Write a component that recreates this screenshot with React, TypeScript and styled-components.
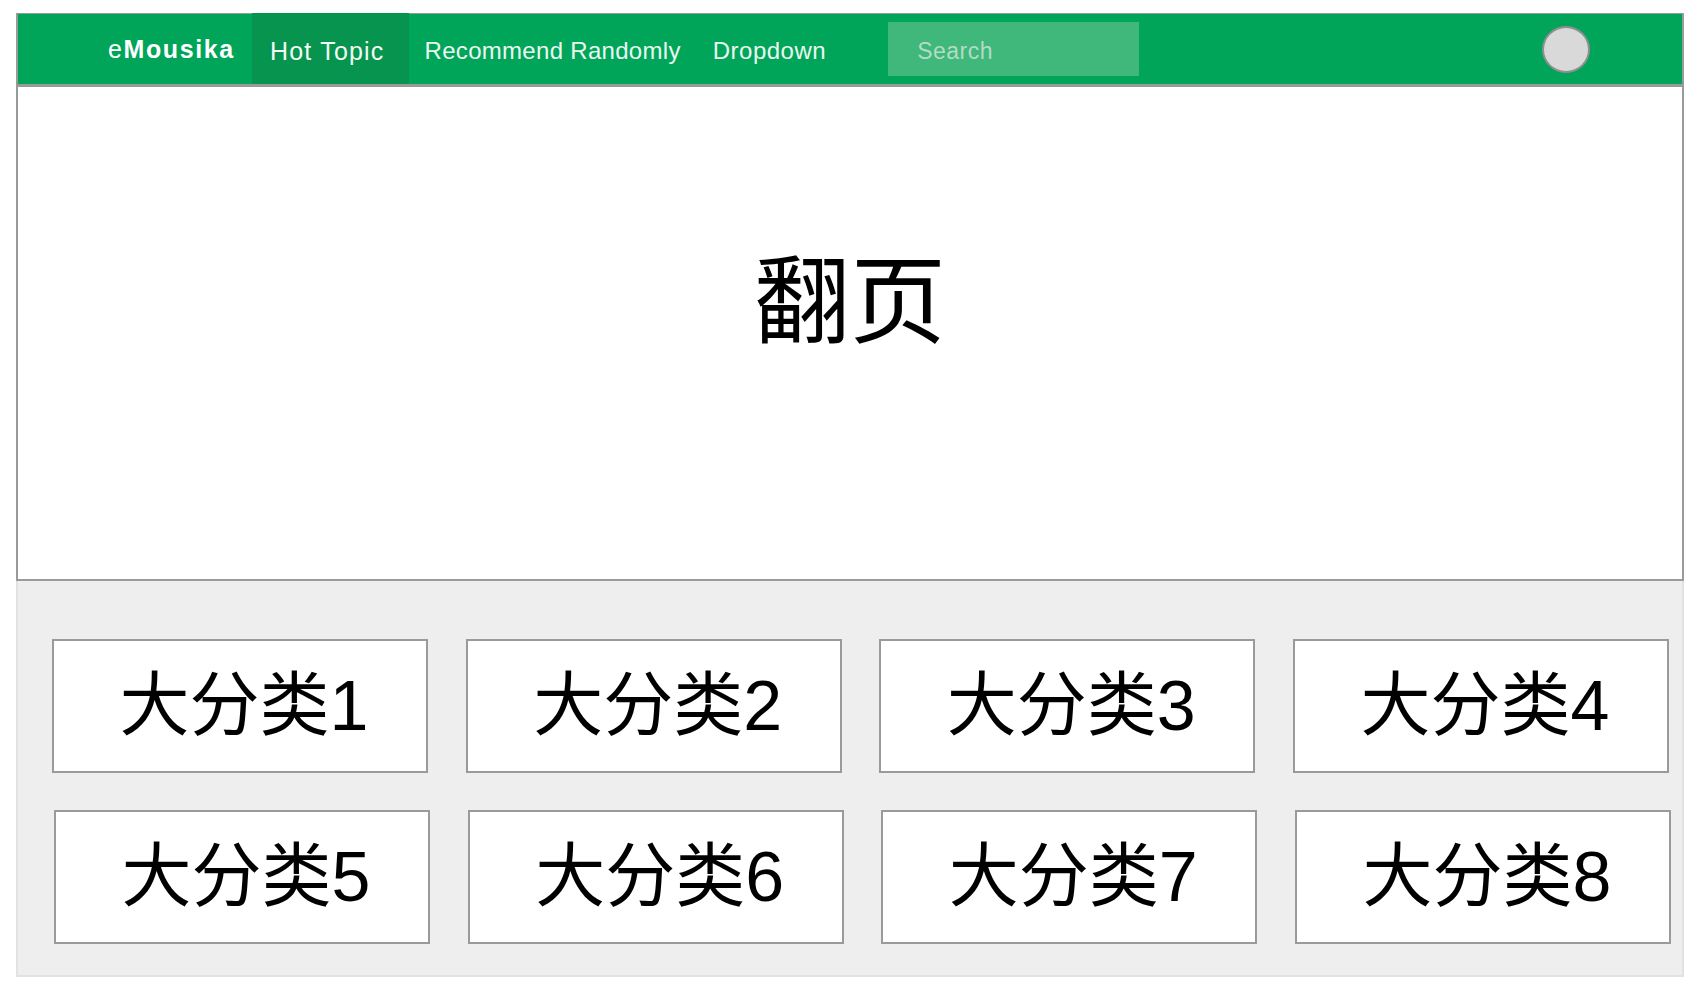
import React from "react";
import styled, { createGlobalStyle } from "styled-components";

const GlobalStyle = createGlobalStyle`
  html, body { margin: 0; padding: 0; background: #ffffff; }
  body { font-family: "Liberation Sans", "Noto Sans CJK SC", sans-serif; }
`;

const Frame = styled.div`
  margin: 13px 0 0 16px;
  width: 1668px;
  display: flex;
  flex-direction: column;
`;

const NavBar = styled.nav`
  height: 70px;
  display: flex;
  align-items: stretch;
  background: #00a55a;
  border: 2px solid #9a9a9a;
  border-top-width: 1px;
  border-bottom-width: 3px;
  box-sizing: content-box;
`;

const Brand = styled.div`
  display: flex;
  align-items: center;
  width: 144px;
  padding-left: 90px;
  color: #ffffff;
  font-size: 25px;
  letter-spacing: 1.6px;
  padding-top: 1px;
  white-space: nowrap;
  b { font-weight: 700; }
`;

const NavItem = styled.a<{ $active?: boolean; $size?: number; $spacing?: number }>`
  display: flex;
  align-items: center;
  padding: 4px 16px 0;
  margin-top: ${(p) => (p.$active ? "-1px" : "0")};
  background: ${(p) => (p.$active ? "#06944f" : "transparent")};
  color: ${(p) => (p.$active ? "#f2fbf6" : "#eaf7f0")};
  font-size: ${(p) => p.$size ?? 24}px;
  letter-spacing: ${(p) => p.$spacing ?? 0.3}px;
  text-decoration: none;
  white-space: nowrap;
  ${(p) => (p.$active ? "padding: 5px 24px 0 18px;" : "")}
`;

const SearchBox = styled.div`
  align-self: center;
  margin-left: 46px;
  width: 222px;
  padding: 4px 0 0 29px;
  box-sizing: content-box;
  height: 50px;
  display: flex;
  align-items: center;
  background: #40b77b;
  color: #b2dcc4;
  font-size: 23px;
  letter-spacing: 0.5px;
`;

const Spacer = styled.div`
  flex: 1;
`;

const Avatar = styled.div`
  align-self: center;
  width: 44px;
  height: 43px;
  margin-right: 92px;
  border-radius: 50%;
  background: #d9d9d9;
  border: 2px solid #8f8f8f;
`;

const Hero = styled.main`
  height: 494px;
  background: #ffffff;
  border: 2px solid #9a9a9a;
  border-top: none;
  display: flex;
  justify-content: center;
  align-items: flex-start;
  padding-top: 147px;
  box-sizing: border-box;
`;

const HeroTitle = styled.h1`
  margin: 0;
  font-family: "Noto Sans CJK SC", sans-serif;
  font-weight: 400;
  font-size: 96px;
  line-height: 120px;
  color: #000000;
`;

const Categories = styled.section`
  background: #eeeeee;
  border: 2px solid #e2e2e2;
  border-top: none;
  height: 396px;
  box-sizing: border-box;
  padding-top: 58px;
  display: flex;
  flex-direction: column;
  gap: 37px;
`;

const Row = styled.div<{ $left: number; $right: number }>`
  display: flex;
  justify-content: space-between;
  padding: 0 ${(p) => p.$right}px 0 ${(p) => p.$left}px;
`;

const Card = styled.div`
  width: 376px;
  height: 134px;
  box-sizing: border-box;
  background: #ffffff;
  border: 2px solid #9a9a9a;
  display: flex;
  align-items: center;
  justify-content: center;
  font-family: "Liberation Sans", "Noto Sans CJK SC", sans-serif;
  font-size: 70px;
  color: #000000;
  padding: 0 0 13px 8px;
`;

const rows = [
  { left: 34, right: 13, items: ["大分类1", "大分类2", "大分类3", "大分类4"] },
  { left: 36, right: 11, items: ["大分类5", "大分类6", "大分类7", "大分类8"] },
];

export default function App() {
  return (
    <>
      <GlobalStyle />
      <Frame>
        <NavBar>
          <Brand>
            e<b>Mousika</b>
          </Brand>
          <NavItem $active $size={25} $spacing={1.2}>Hot Topic</NavItem>
          <NavItem>Recommend Randomly</NavItem>
          <NavItem $spacing={0.5}>Dropdown</NavItem>
          <SearchBox>Search</SearchBox>
          <Spacer />
          <Avatar />
        </NavBar>
        <Hero>
          <HeroTitle>翻页</HeroTitle>
        </Hero>
        <Categories>
          {rows.map((r, i) => (
            <Row key={i} $left={r.left} $right={r.right}>
              {r.items.map((t) => (
                <Card key={t}>{t}</Card>
              ))}
            </Row>
          ))}
        </Categories>
      </Frame>
    </>
  );
}
